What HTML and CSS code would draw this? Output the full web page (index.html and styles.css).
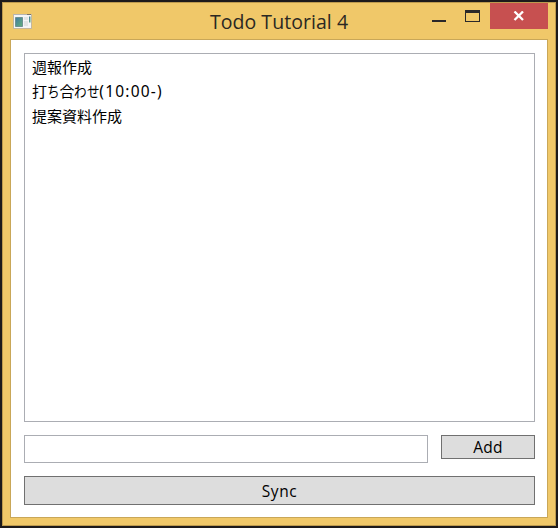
FILE: index.html
```
<!DOCTYPE html>
<html lang="ja">
<head>
<meta charset="utf-8">
<title>Todo Tutorial 4</title>
<link rel="stylesheet" href="styles.css">
</head>
<body>
<div class="window">
  <header class="titlebar">
    <svg class="app-icon" width="20" height="16" viewBox="0 0 20 16">
      <defs><linearGradient id="pane" x1="0" y1="0" x2="1" y2="1"><stop offset="0" stop-color="#4278a4"/><stop offset="1" stop-color="#63b279"/></linearGradient></defs>
      <path d="M1 1h19v15H1z" fill="#c3b79d"/>
      <path d="M2 1h17v14H2z" fill="#f4f5f7"/>
      <path d="M1 1h18v1H1z" fill="#b5b5b4"/>
      <path d="M15 1h4v1h-4z" fill="#77736b"/>
      <path d="M3.500 4.500h7v9h-7z" fill="url(#pane)" stroke="#6f9294" stroke-width="1"/>
      <path d="M12 4h4v3h-4zM12 8h4v5h-4z" fill="#e2e5e6"/>
      <path d="M17 3.500h1.500v6H17z" fill="url(#pane)"/>
    </svg>
    <h1 class="title">Todo Tutorial 4</h1>
    <div class="controls">
      <span class="minimize"></span>
      <span class="maximize"></span>
      <button class="close" aria-label="Close"><svg width="12" height="10" viewBox="0 0 12 10"><path d="M1.500 .5L10 9M10 .5L1.500 9" stroke="#fff" stroke-width="2.300" fill="none"/></svg></button>
    </div>
  </header>
  <main class="client">
    <ul class="tasks">
      <li>週報作成</li>
      <li>打<span class="kana">ち</span>合<span class="kana">わ</span><span class="kana">せ</span><span class="time">(10:00-)</span></li>
      <li>提案資料作成</li>
    </ul>
    <div class="entry">
      <input class="field" type="text">
      <button class="btn add">Add</button>
    </div>
    <button class="btn sync">Sync</button>
  </main>
</div>
</body>
</html>
```
FILE: styles.css
```
* { box-sizing: border-box; }
body {
  margin: 0;
  padding: 2px;
  width: 558px;
  height: 528px;
  background: #1c1a1b;
  font-family: "Noto Sans", "Noto Sans CJK JP", sans-serif;
  color: #000;
}
.window {
  display: flex;
  flex-direction: column;
  height: 524px;
  padding: 0 7px 7px;
  border: 1px solid #bd9a4e;
  background: #f0c869;
}
.titlebar {
  display: grid;
  grid-template-columns: 118px 1fr 118px;
  height: 36px;
  flex: none;
}
.app-icon { margin: 10px 0 0 2px; }
.title {
  margin: 0;
  padding-top: 4px;
  font-family: "Open Sans", "Noto Sans", sans-serif;
  font-size: 19.500px;
  line-height: 30px;
  font-weight: 400;
  letter-spacing: .05px;
  text-align: center;
  white-space: nowrap;
  color: #2b2823;
}
.controls { display: flex; justify-content: flex-end; }
.minimize { width: 14px; height: 2px; margin: 17px 19px 0 0; background: #2a2829; }
.maximize {
  width: 15px;
  height: 12px;
  margin: 7px 10px 0 0;
  border: 1px solid #2a2829;
  border-top-width: 3px;
}
.close {
  display: flex;
  align-items: center;
  justify-content: center;
  width: 58px;
  height: 26px;
  padding: 0;
  border: 0;
  background: #c75050;
}
.client {
  display: flex;
  flex-direction: column;
  gap: 13px;
  flex: 1;
  padding: 13px 12px 12px 13px;
  border: 1px solid #c9a758;
  background: #fff;
}
.tasks {
  flex: 1;
  margin: 0;
  padding: 1px 7px;
  border: 1px solid #abadb3;
  list-style: none;
  font-size: 15px;
  line-height: 24.400px;
}
.kana {
  display: inline-block;
  margin-right: -2.600px;
  transform: scaleX(.84);
  transform-origin: left;
}
.time { font-size: 15.500px; letter-spacing: 1.200px; line-height: 1; }
.entry { display: flex; align-items: flex-start; gap: 13px; }
.field { width: 404px; height: 28px; border: 1px solid #abadb3; background: #fff; }
.btn {
  display: flex;
  align-items: center;
  justify-content: center;
  padding: 0;
  border: 1px solid #707070;
  background: #ddd;
  font: inherit;
  font-family: "Open Sans", "Noto Sans", sans-serif;
  font-size: 15.500px;
  letter-spacing: .2px;
  color: #000;
}
.add { width: 94px; height: 24px; }
.sync { width: 511px; height: 29px; letter-spacing: .6px; }
```
